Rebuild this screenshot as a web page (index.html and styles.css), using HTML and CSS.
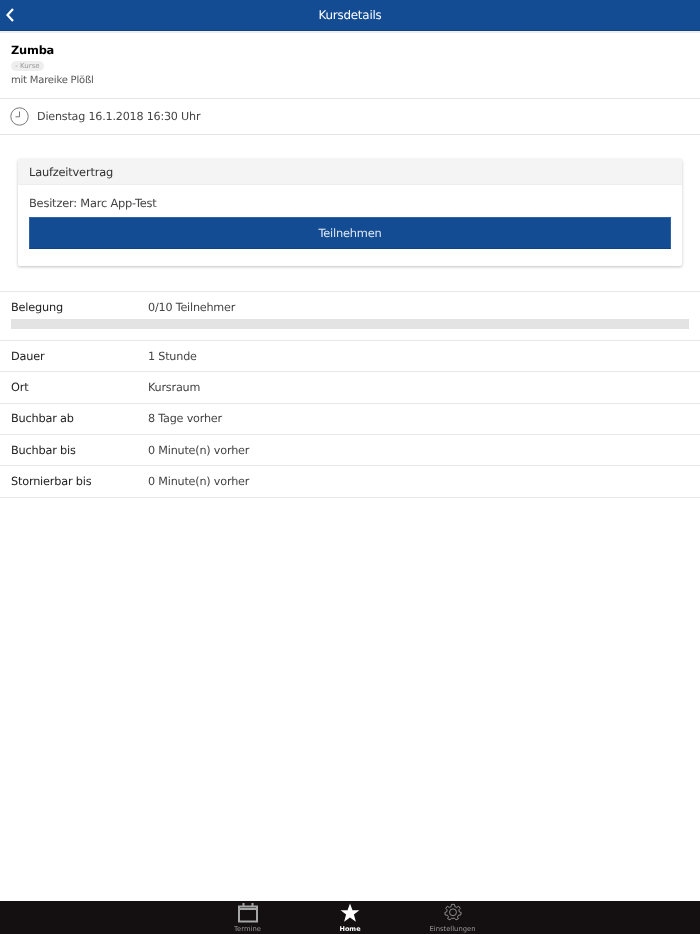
FILE: index.html
```html
<!DOCTYPE html>
<html lang="de">
<head>
<meta charset="utf-8">
<title>Kursdetails</title>
<link rel="stylesheet" href="styles.css">
</head>
<body>
<div class="app">
  <header class="topbar">
    <svg class="back" width="10" height="14" viewBox="0 0 10 14"><path d="M8 1 2.500 7 8 13" fill="none" stroke="#fff" stroke-width="2.200"/></svg>
    <span class="topbar-title">Kursdetails</span>
  </header>
  <main class="content">
    <section class="intro">
      <h1 class="course">Zumba</h1>
      <span class="tag">- Kurse</span>
      <p class="teacher">mit Mareike Plößl</p>
    </section>
    <section class="when">
      <svg class="clock" width="19" height="19" viewBox="0 0 19 19"><circle cx="9.500" cy="9.500" r="8.700" fill="none" stroke="#777" stroke-width="1"/><path d="M9.500 4.500V9.800H5.500" fill="none" stroke="#777" stroke-width="1"/></svg>
      <span>Dienstag 16.1.2018 16:30 Uhr</span>
    </section>
    <section class="card">
      <div class="card-head">Laufzeitvertrag</div>
      <div class="card-body">
        <div class="owner">Besitzer: Marc App-Test</div>
        <button class="join">Teilnehmen</button>
      </div>
    </section>
    <section class="details">
      <div class="occ">
        <div class="occ-row"><span class="label">Belegung</span><span class="value">0/10 Teilnehmer</span></div>
        <div class="bar"></div>
      </div>
      <div class="row"><span class="label">Dauer</span><span class="value">1 Stunde</span></div>
      <div class="row"><span class="label">Ort</span><span class="value">Kursraum</span></div>
      <div class="row"><span class="label">Buchbar ab</span><span class="value">8 Tage vorher</span></div>
      <div class="row"><span class="label">Buchbar bis</span><span class="value">0 Minute(n) vorher</span></div>
      <div class="row"><span class="label">Stornierbar bis</span><span class="value">0 Minute(n) vorher</span></div>
    </section>
  </main>
  <nav class="tabs">
    <div class="tab">
      <svg width="20" height="20" viewBox="0 0 20 20"><path d="M1 3.500H19V18.500H1ZM1 6H19" fill="none" stroke="#a6a6a6" stroke-width="2"/><path d="M5.500 0V4M14.500 0V4" stroke="#a6a6a6" stroke-width="2"/></svg>
      <span>Termine</span>
    </div>
    <div class="tab active">
      <svg width="20" height="20" viewBox="0 0 20 20"><path d="M10 .5 12.500 7.200H19.400L13.900 11.500 15.900 18.800 10 14.500 4.100 18.800 6.100 11.500 .6 7.200H7.500Z" fill="#fff"/></svg>
      <span>Home</span>
    </div>
    <div class="tab">
      <svg width="20" height="20" viewBox="-1 0 22 22"><path d="M8.400 1.500H11.600L12.100 4 14.200 4.900 16.300 3.500 18 5.900 16.400 7.600 17 9.800 19 10.500 18.500 13.300 16.200 13.300 15 15.200 15.900 17.300 13.300 18.600 11.800 16.800H8.200L6.700 18.600 4.100 17.300 5 15.200 3.800 13.300 1.500 13.300 1 10.500 3 9.800 3.600 7.600 2 5.900 3.700 3.500 5.800 4.900 7.900 4Z" fill="none" stroke="#999" stroke-width="1"/><circle cx="10" cy="10.200" r="3.800" fill="none" stroke="#999" stroke-width="1"/></svg>
      <span>Einstellungen</span>
    </div>
  </nav>
</div>
</body>
</html>
```
FILE: styles.css
```css
* { box-sizing: border-box; }
html, body { margin: 0; height: 100%; }
body { font-family: "DejaVu Sans", sans-serif; color: #444; text-rendering: geometricPrecision; }
.app { display: flex; flex-direction: column; height: 934px; overflow: hidden; will-change: transform; }
.topbar { position: relative; flex: none; height: 31px; background: #144c94; border-bottom: 1px solid #0f4285; display: flex; align-items: center; justify-content: center; color: #fff; font-size: 11.900px; letter-spacing: -.2px; box-shadow: 0 2px 0 #eee; }
.back { position: absolute; left: 5px; top: 8px; }
.content { flex: 1; min-height: 0; }
.intro { height: 68px; padding: 12px 11px 0; border-bottom: 1px solid #e4e4e4; }
.course { margin: 0; font-size: 11.400px; letter-spacing: -.2px; line-height: 14px; color: #000; font-weight: 700; }
.tag { display: block; width: 33px; height: 10px; margin-top: 4px; border-radius: 5px; background: #eee; color: #999; font-size: 7px; line-height: 10px; text-align: center; white-space: nowrap; }
.teacher { margin: 3px 0 0; font-size: 10px; letter-spacing: -.2px; line-height: 14px; color: #555; }
.when { height: 36px; padding-left: 10px; display: flex; align-items: center; gap: 8px; border-bottom: 1px solid #e4e4e4; font-size: 11.150px; letter-spacing: -.2px; color: #444; }
.card { margin: 24px 18px 25px; height: 107px; border-radius: 2px; background: #fff; box-shadow: 0 1px 3px rgba(0,0,0,.25); }
.card-head { height: 26px; padding-left: 11px; background: #f4f4f4; border-bottom: 1px solid #eee; font-size: 11.400px; letter-spacing: -.2px; line-height: 27px; color: #333; }
.card-body { padding: 11px 11px 0; }
.owner { font-size: 11.400px; letter-spacing: -.2px; line-height: 15px; color: #444; }
.join { display: block; width: 100%; height: 32px; margin: 6px 0 0; padding: 0; border: 1px solid #2f63a6; border-bottom-color: #0f4285; background: #144c94; color: #dfe8f3; font: 11.400px "DejaVu Sans", sans-serif; letter-spacing: -.2px; text-rendering: geometricPrecision; }
.details { border-top: 1px solid #e8e8e8; }
.occ { height: 49px; padding: 0 11px; border-bottom: 1px solid #e8e8e8; }
.occ-row { display: flex; height: 27px; padding-top: 3px; align-items: center; }
.occ .label { width: 137px; }
.bar { height: 10px; background: #e3e3e3; }
.row { display: flex; align-items: center; height: 31.350px; padding: 0 11px; border-bottom: 1px solid #e8e8e8; }
.row .label { width: 137px; }
.label { font-size: 11.300px; letter-spacing: -.2px; color: #222; }
.value { font-size: 11.200px; letter-spacing: -.2px; color: #444; }
.tabs { flex: none; height: 33px; background: #140f10; display: flex; justify-content: center; }
.tab { width: 102.500px; display: flex; flex-direction: column; align-items: center; color: #999; font-size: 6.800px; line-height: 9px; padding-top: 2px; }
.tab svg { display: block; height: 20px; margin-bottom: 2px; }
.tab.active { color: #fff; font-weight: 700; font-size: 6.500px; }
```
